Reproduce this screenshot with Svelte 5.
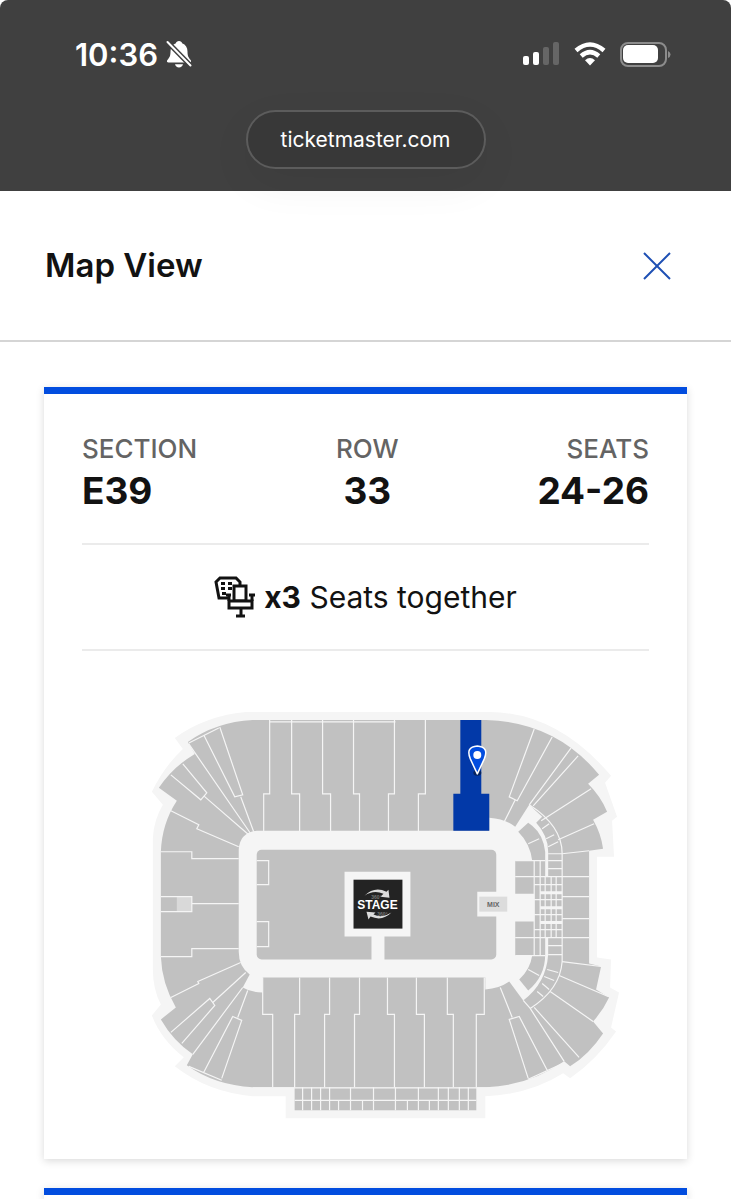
<script lang="ts">
    const details = [
        { label: 'SECTION', value: 'E39' },
        { label: 'ROW', value: '33' },
        { label: 'SEATS', value: '24-26' },
    ];
    const seatCount = 3;

    // Straight-sided stands: x at the outer wall, x at the floor
    const topStands = [
        [269, 263],
        [291, 299],
        [322, 330],
        [353, 359],
        [394, 388],
        [425, 418],
    ];
    const bottomStands = [
        [272, 262],
        [294, 299],
        [324, 329],
        [354, 359],
        [394, 387],
        [424, 416],
        [453, 447],
        [476, 484],
    ];

    // Suites behind the bottom stands
    const suitesUpper = [302, 311, 320, 329, 350, 373, 395, 418, 438, 448, 459, 468];
    const suitesLower = [302, 311, 320, 329, 338, 350, 362, 373, 395, 407, 418, 429, 438, 448, 459, 468];

    const cornerLines = [
        // top left
        'M170 775L200 800L206 793L182 764M203 796L248 835M188 744L250 834',
        'M188 743L218 728M203 735L234 797L242 795L219 727M240 797L253 832',
        'M170 811L198 825L196 829L238 847M160 852H191V859H238',
        // left
        'M160 897H191V912H160M191 904H238M160 957H191V949H238',
        // bottom left
        'M170 998L198 984L197 982L240 963M170 1033L209 999L214 1006L181 1044',
        'M212 1003L245 973M192 1055L242 988',
        'M203 1073L232 1017L241 1021L221 1079M237 1018L247 991M188 1067L221 1081',
        // top right
        'M534 729L509 797L517 801L552 737M515 800L504 822M571 748L529 805',
        'M578 756L533 806M591 789L541 821M594 824L558 840M589 851L562 854',
        // bottom right
        'M562 962L601 967M559 976L608 997M550 992L593 1022M534 1008L579 1058',
        'M523 1001L530 1009L564 1062M500 988L512 1018',
        'M528 1079L509 1020L519 1017L547 1071M528 1080L563 1064',
        // right
        'M529 805Q562 826 562 854V962Q560 990 530 1009',
        'M542 829L549 824M546 839L554 835M548 847L558 842M548 854H562M548 861H562M548 869H562',
        'M548 946H562M548 955H562M547 970L558 973M544 977L554 981M542 984L549 990M537 992L543 997',
        'M528 844L539 839M528 970L539 976M515 861H545M515 956H545M515 877H534M515 938H534',
        'M534 861V956M540 861V956M545 877V938M551 877V938M556 877V938',
        'M534 877H589M534 885H562M534 900H562M534 915H562M534 930H562M534 938H589M562 897H589M562 919H589',
    ];
</script>

<div class="screen">
    <header class="browser">
        <div class="status">
            <div class="clock">
                <span>10:36</span>
                <svg width="26" height="28" viewBox="0 0 26 28" aria-label="Silent mode">
                    <path d="M13 1c-1.700 0-2.800 1-3.100 2.200C6.300 4.500 4.500 7.500 4.500 11.500c0 4.500-1 6-2.900 8.200-1.300 1.500-.6 2.800 1 2.800h20.800c1.600 0 2.300-1.300 1-2.800-1.900-2.200-2.900-3.700-2.900-8.200 0-4-1.800-7-5.400-8.300C15.800 2 14.700 1 13 1zM9 24.200c.4 1.900 2 3.200 4 3.200s3.600-1.300 4-3.200z" fill="#fff" />
                    <path d="M1 1.500L25 26" stroke="#404040" stroke-width="5" />
                    <path d="M1.500 2L24.500 25.500" stroke="#fff" stroke-width="2" stroke-linecap="round" />
                </svg>
            </div>
            <div class="signals">
                <svg width="37" height="24" viewBox="0 0 37 24" aria-label="Cellular signal">
                    <rect x="0" y="14" width="6" height="9" rx="2" fill="#fff" />
                    <rect x="10" y="10" width="6" height="13" rx="2" fill="#fff" />
                    <rect x="20" y="5" width="6" height="18" rx="2" fill="#666" />
                    <rect x="30" y="0" width="6" height="23" rx="2" fill="#666" />
                </svg>
                <svg width="32" height="24" viewBox="0 0 32 24" aria-label="Wi-Fi">
                    <g fill="none" stroke="#fff" stroke-width="4.500">
                        <path d="M2 8.500Q16-3.500 30 8.500" />
                        <path d="M7.200 14Q16 6.300 24.800 14" />
                    </g>
                    <path d="M16 23.500L11 18.200Q16 13.600 21 18.200z" fill="#fff" />
                </svg>
                <svg width="51" height="25" viewBox="0 0 51 25" aria-label="Battery">
                    <rect x="1" y="1" width="45" height="23" rx="7" fill="none" stroke="#8c8c8c" stroke-width="2" />
                    <rect x="3" y="3" width="35" height="18" rx="5" fill="#fff" />
                    <path d="M48 9q2.500 1 2.500 3.500T48 16z" fill="#8c8c8c" />
                </svg>
            </div>
        </div>
        <div class="address">ticketmaster.com</div>
    </header>

    <div class="title-bar">
        <h1>Map View</h1>
        <button class="close" type="button" aria-label="Close">
            <svg width="28" height="28" viewBox="0 0 28 28">
                <path d="M1 1L27 27M27 1L1 27" stroke="#1e50b4" stroke-width="2" />
            </svg>
        </button>
    </div>

    <main>
        <section class="card">
            <dl class="details">
                {#each details as d}
                    <div>
                        <dt>{d.label}</dt>
                        <dd>{d.value}</dd>
                    </div>
                {/each}
            </dl>

            <div class="together">
                <svg width="42" height="42" viewBox="0 0 42 42" aria-hidden="true">
                    <g fill="none" stroke="#121212" stroke-width="3">
                        <path d="M16 22H5L2 6L6 2H22L26 6V10" />
                        <rect x="20" y="10" width="12" height="15" fill="#fff" />
                        <path d="M12 19H17M15 19V25M35 19H41M38 19V25" />
                        <rect x="15" y="25" width="23" height="7" fill="#fff" />
                        <path d="M27 32V40M22 40H31" />
                    </g>
                    <path d="M7 6h4v3h-4zM14 6h4v3h-4zM7 11h4v3h-4zM14 11h4v3h-4zM8 16h4v3h-4z" fill="#121212" />
                </svg>
                <p><strong>x{seatCount}</strong> Seats together</p>
            </div>

            <svg class="map" viewBox="81 702 568 420" role="img" aria-label="Seat map">
                <!-- concourse -->
                <path
                    fill="#f5f5f5"
                    d="M152 838Q153 820 162 805L151 792Q163 767 182 749L174 738Q204 716 245 712H490Q558 713 611 776L605 783L617 817L612 821L614 857H597V958L611 960L610 988L619 993L611 1028L616 1032Q597 1060 570 1079L563 1074Q530 1095 485 1097V1119H285V1097H252Q207 1093 174 1067L183 1058Q160 1040 151 1016L160 1005Q152 990 152 970z"
                />
                <!-- stands -->
                <path
                    fill="#c1c1c1"
                    d="M160 852Q161 824 176 801L158 788Q172 767 194 754L187 742Q215 722 252 720H486Q556 722 599 775L588 784Q601 797 607 812L593 820Q601 834 603 849L589 851V964L601 967L596 990L609 998Q603 1011 593 1022L603 1034Q589 1055 570 1067L564 1062Q530 1086 486 1088H252Q214 1086 186 1066L192 1055Q172 1041 160 1020L175 1008Q161 984 160 957z"
                />
                <rect x="294" y="1088" width="182" height="23" fill="#c1c1c1" />
                <rect x="176" y="897" width="15" height="15" fill="#d9d9d9" />
                <!-- walkway around the floor -->
                <path
                    fill="#f5f5f5"
                    d="M256 831H489V818Q505 819 515 827L529 805L542 817L536 823Q548 836 548 852V877H545V852Q543 835 532 826L528 823L518 832Q530 844 532 861H515V894H534V922H515V956H532Q530 970 519 980L528 991Q545 977 545 955V938H548V955Q546 984 523 1001L509 982Q499 989 485 990V978H262V993Q250 993 242 988L249 975Q238 967 238 952V850Q239 833 256 831z"
                />
                <rect x="256" y="850" width="240" height="110" rx="5" fill="#c1c1c1" />
                <path fill="#f5f5f5" d="M344 872H410V937H384V961H371V937H344zM477 892H497V917H477z" />
                <g class="lines">
                    {#each topStands as [outer, inner]}
                        <path d="M{outer} 720V794H{inner}V832" />
                    {/each}
                    {#each bottomStands as [outer, inner]}
                        <path d="M{inner} 978V1015H{outer}V1088" />
                    {/each}
                    {#each suitesUpper as x}
                        <path d="M{x} 1088V1101" />
                    {/each}
                    {#each suitesLower as x}
                        <path d="M{x} 1101V1111" />
                    {/each}
                    {#each cornerLines as d}
                        <path {d} />
                    {/each}
                    <path d="M269 722H395M256 861H268V885H256M256 922H268V947H256M252 1088.500H490M294 1101H476" />
                    <path class="aisle" d="M540 893H562M540 908H562M540 923H562" />
                </g>

                <!-- selected section and its pin -->
                <path d="M460 720H481V794H489V831H453V794H460z" fill="#0239a8" />
                <ellipse cx="477" cy="773" rx="4" ry="3" fill="#06245f" />
                <path d="M477 774L470 759Q465 747 477 746Q489 747 484 759z" fill="#024ddf" stroke="#fff" stroke-width="1.500" stroke-linejoin="round" />
                <circle cx="477" cy="755" r="4" fill="#fff" />

                <rect x="353" y="880" width="49" height="49" fill="#232323" />
                <path d="M364 896Q374 886 386 892L388 890L389 898L380 897L383 894Q373 890 364 896z" fill="#ddd" />
                <path d="M391 913Q382 922 370 917L368 920L366 912L375 913L373 915Q382 919 391 913z" fill="#ddd" />
                <text class="degrees" x="376" y="899">360°</text>
                <text class="degrees" x="382" y="916">360°</text>
                <text class="stage" x="377" y="909">STAGE</text>
                <rect x="479" y="897" width="28" height="15" fill="#dcdcdc" />
                <text class="mix" x="493" y="907">MIX</text>
            </svg>
        </section>

        <section class="card next" aria-label="Next ticket"></section>
    </main>
</div>

<style>
    :global(body) {
        margin: 0;
        background: #fff;
    }

    .screen {
        font-family: Inter, 'Liberation Sans', sans-serif;
        color: #121212;
        overflow: hidden;
    }

    .screen svg {
        display: block;
    }

    .browser {
        padding: 34px 0 22px;
        background: #404040;
        border-radius: 8px 8px 0 0;
        color: #fff;
    }

    .status {
        display: flex;
        justify-content: space-between;
        align-items: center;
        height: 40px;
        padding: 0 60px 0 75px;
    }

    .clock {
        display: flex;
        align-items: center;
        gap: 8px;
        font-size: 31px;
        font-weight: 600;
    }

    .signals {
        display: flex;
        align-items: center;
        gap: 14px;
    }

    .address {
        width: 236px;
        margin: 36px auto 0;
        border: 2px solid #5c5c5c;
        border-radius: 30px;
        background: #383838;
        box-shadow: 0 14px 44px rgba(0, 0, 0, 0.06);
        font-size: 21px;
        line-height: 55px;
        text-align: center;
    }

    .title-bar {
        display: flex;
        justify-content: space-between;
        align-items: center;
        padding: 54px 60px 54px 45px;
        border-bottom: 2px solid #d5d5d5;
    }

    h1 {
        margin: 0;
        font-size: 33px;
        font-weight: 600;
        line-height: 41px;
    }

    .close {
        padding: 0;
        border: 0;
        background: none;
        cursor: pointer;
    }

    main {
        display: flex;
        flex-direction: column;
        gap: 29px;
        padding: 45px 44px 0;
    }

    .card {
        padding: 0 38px 38px;
        border-top: 7px solid #024ddf;
        background: #fff;
        box-shadow: 0 2px 8px rgba(0, 0, 0, 0.15);
    }

    .next {
        height: 4px;
        padding: 0;
    }

    .details {
        display: flex;
        justify-content: space-between;
        margin: 0;
        padding: 38px 0 26px;
        border-bottom: 2px solid #ebebeb;
    }

    .details div {
        text-align: center;
    }

    .details div:first-child {
        text-align: left;
    }

    .details div:last-child {
        text-align: right;
    }

    dt {
        color: #646464;
        font-size: 26px;
        font-weight: 500;
        line-height: 33px;
    }

    dd {
        margin: 0;
        font-size: 37px;
        font-weight: 700;
        line-height: 52px;
    }

    .together {
        display: flex;
        justify-content: center;
        align-items: center;
        gap: 8px;
        height: 104px;
        border-bottom: 2px solid #ebebeb;
    }

    .together p {
        margin: 0;
        font-size: 30px;
    }

    .map {
        width: 100%;
        margin-top: 51px;
    }

    .lines {
        fill: none;
        stroke: #f5f5f5;
        stroke-width: 1.2;
    }

    .aisle {
        stroke-width: 3;
    }

    .map text {
        font-family: 'Liberation Sans', Arial, sans-serif;
        font-weight: 700;
        text-anchor: middle;
    }

    .stage {
        fill: #fff;
        font-size: 12px;
    }

    .mix {
        fill: #666;
        font-size: 7px;
    }

    .degrees {
        fill: #777;
        font-size: 5px;
    }
</style>
